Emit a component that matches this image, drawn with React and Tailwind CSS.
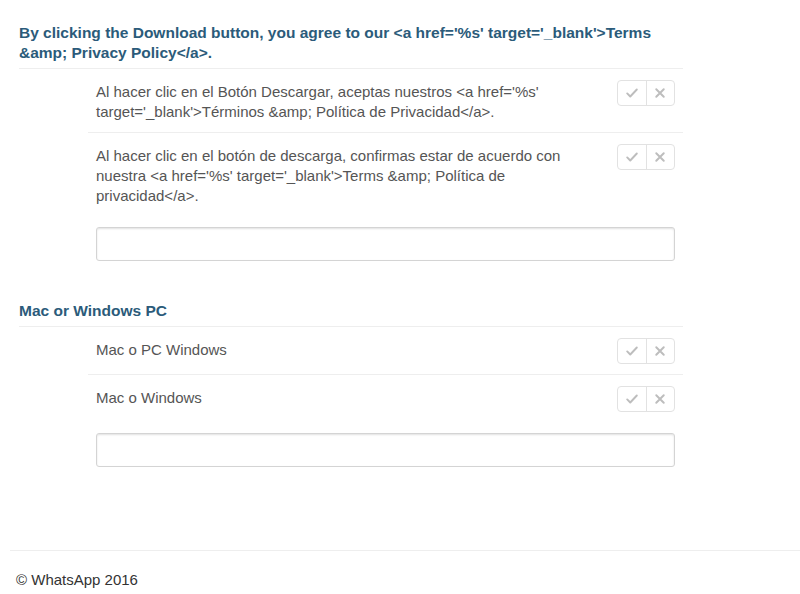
import React from 'react';

const sections = [
  {
    title: "By clicking the Download button, you agree to our <a href='%s' target='_blank'>Terms &amp; Privacy Policy</a>.",
    rows: [
      "Al hacer clic en el Botón Descargar, aceptas nuestros <a href='%s' target='_blank'>Términos &amp; Política de Privacidad</a>.",
      "Al hacer clic en el botón de descarga, confirmas estar de acuerdo con nuestra <a href='%s' target='_blank'>Terms &amp; Política de privacidad</a>.",
    ],
  },
  {
    title: 'Mac or Windows PC',
    rows: ['Mac o PC Windows', 'Mac o Windows'],
  },
];

const VoteButtons = () => (
  <div className="flex h-[26px] w-[58px] shrink-0 rounded-[4px] border border-[#e2e2e2] bg-white">
    <button className="flex flex-1 items-center justify-center border-r border-[#e2e2e2]">
      <svg width="14" height="14" viewBox="0 0 16 16" fill="none">
        <path d="M2.5 8.5l3.5 3.5 7.5-8" stroke="#bdbdbd" strokeWidth="2.2" strokeLinecap="round" strokeLinejoin="round" />
      </svg>
    </button>
    <button className="flex flex-1 items-center justify-center">
      <svg width="12" height="12" viewBox="0 0 16 16" fill="none">
        <path d="M3 3l10 10M13 3L3 13" stroke="#bdbdbd" strokeWidth="2.6" strokeLinecap="round" />
      </svg>
    </button>
  </div>
);

const Section = ({ title, rows }) => (
  <div className="w-[664px]">
    <h2 className="border-b border-[#eeeeee] pb-[5px] text-[15.5px] font-bold leading-[20px] text-[#2b5b7a]">
      {title}
    </h2>
    <div className="ml-[69px]">
      {rows.map((row, i) => (
        <div
          key={i}
          className={`flex items-start justify-between pb-[10px] pl-[8px] pr-[8px] pt-[11px] ${
            i < rows.length - 1 ? 'border-b border-[#eeeeee]' : ''
          }`}
        >
          <p className="w-[500px] pt-[2px] text-[15px] leading-[20px] text-[#555555]">{row}</p>
          <VoteButtons />
        </div>
      ))}
      <div className="pl-[8px] pr-[8px] pt-[11px]">
        <input
          type="text"
          className="block h-[34px] w-full rounded-[3px] border border-[#d4d4d4] bg-white shadow-[inset_0_1px_2px_rgba(0,0,0,0.12)] outline-none"
        />
      </div>
    </div>
  </div>
);

export default function App() {
  return (
    <div className="min-h-[594px] w-[800px] bg-white font-['Liberation_Sans',Arial,sans-serif]">
      <div className="flex flex-col gap-[40px] pl-[19px] pt-[23px]">
        {sections.map((s, i) => (
          <Section key={i} title={s.title} rows={s.rows} />
        ))}
      </div>
      <footer className="ml-[10px] mt-[83px] border-t border-[#eeeeee] pl-[6px] pt-[19px]">
        <p className="text-[15px] leading-[20px] text-[#333333]">© WhatsApp 2016</p>
      </footer>
    </div>
  );
}
